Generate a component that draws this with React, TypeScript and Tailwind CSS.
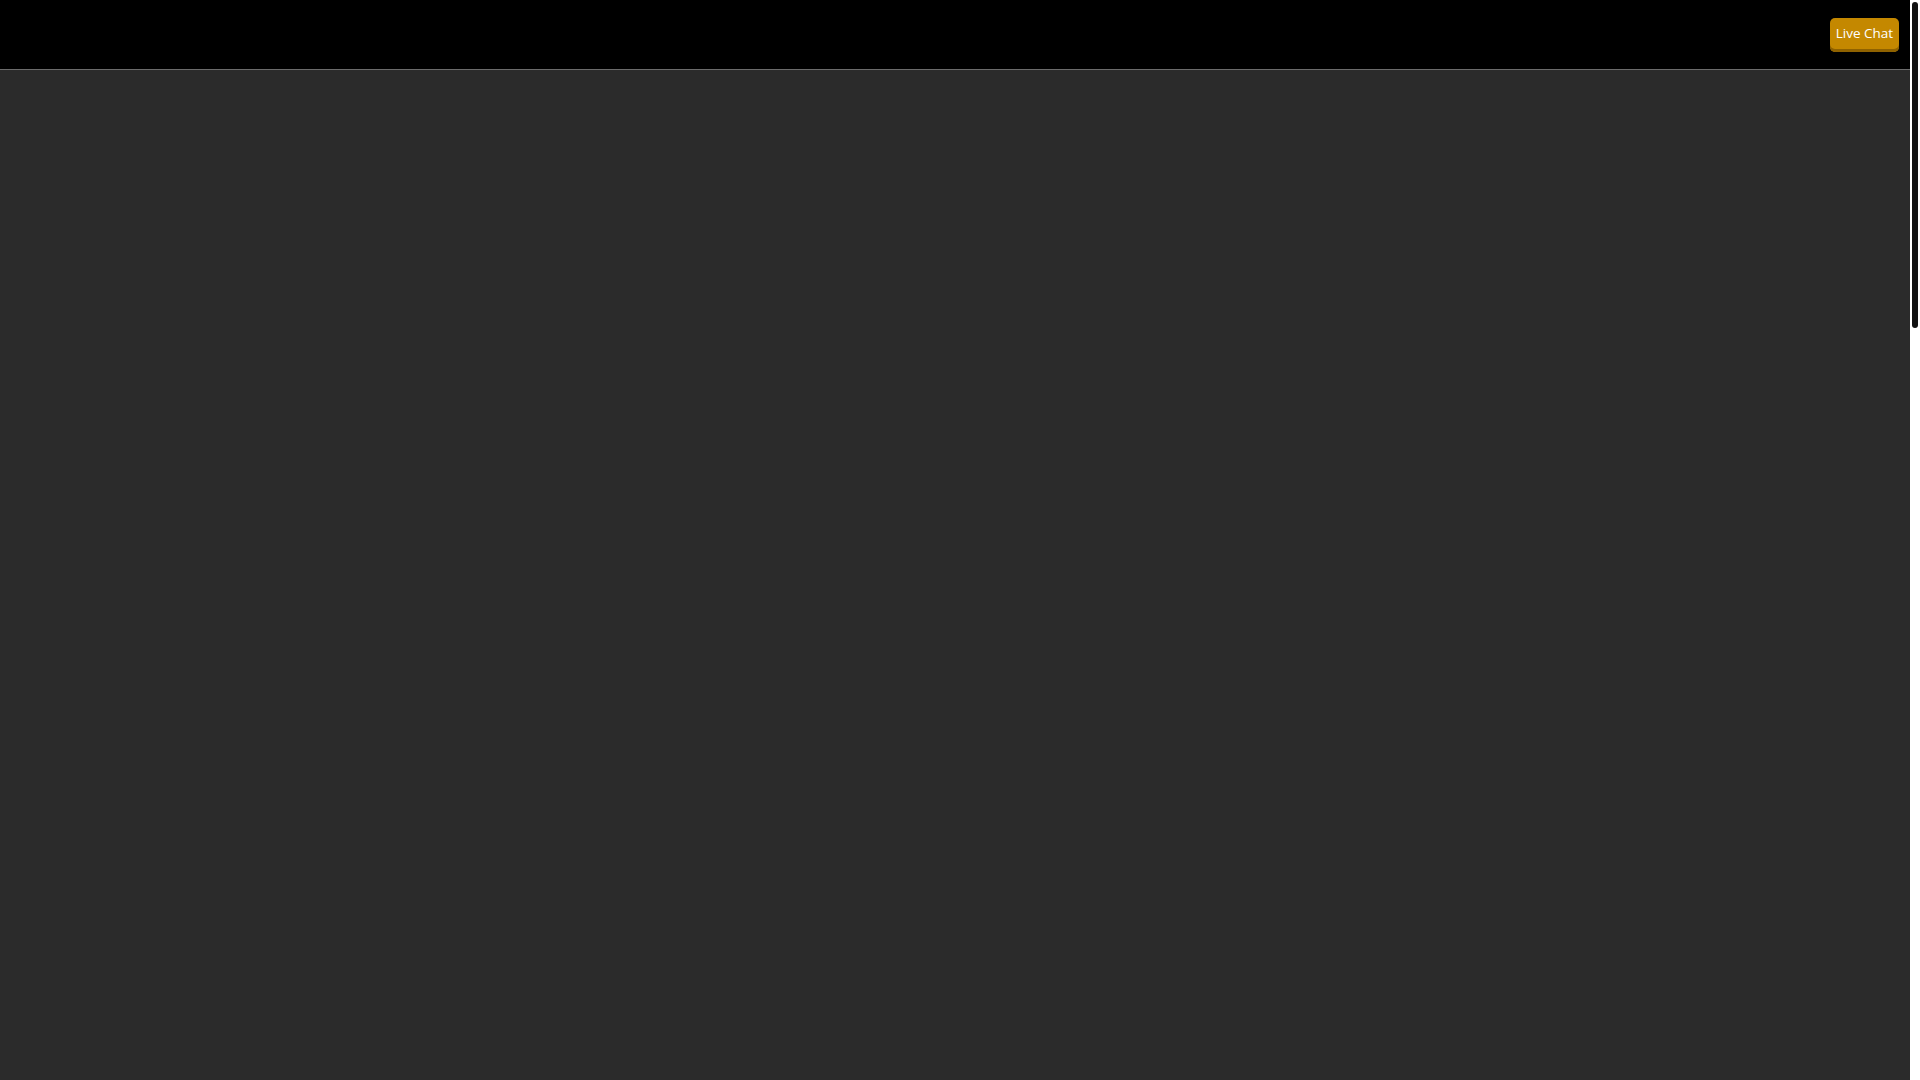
import React from "react";

export default function App() {
  return (
    <div
      className="flex h-screen w-full overflow-hidden bg-[#2b2b2b]"
      style={{ fontFamily: '"Open Sans", "Noto Sans", sans-serif' }}
    >
      <div className="flex min-w-0 flex-1 flex-col">
        <header className="flex h-[70px] shrink-0 items-start justify-end border-b border-[#6b6b6b] bg-black pr-[11px] pt-[18px]">
          <button className="h-[34px] w-[69px] rounded-[5px] bg-[#c48800] pb-[3px] text-center text-[13.5px] leading-[31px] text-white shadow-[inset_0_-3px_0_#8f6200]">
            Live Chat
          </button>
        </header>
        <main className="flex-1 bg-[#2b2b2b]" />
      </div>
      <div className="w-[10px] shrink-0 bg-white px-[2px] pt-[2px]">
        <div className="h-[326px] w-[6px] rounded-full bg-[#111]" />
      </div>
    </div>
  );
}
